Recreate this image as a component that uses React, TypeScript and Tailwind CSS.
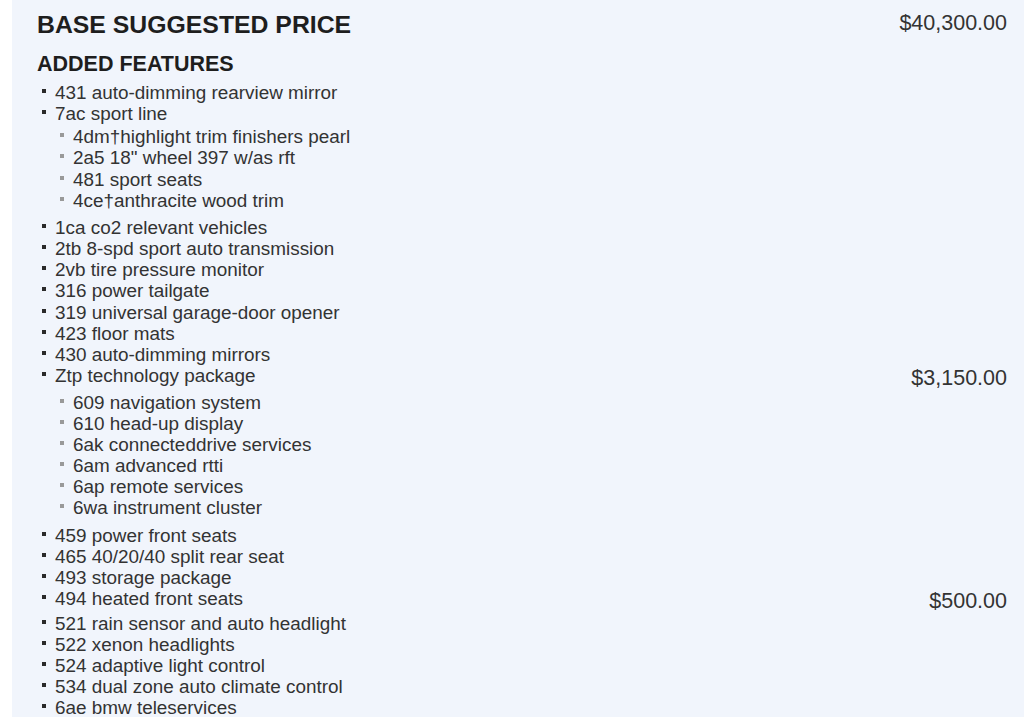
type Item = {
  label: string
  price?: string
  children?: string[]
}

const items: Item[] = [
  { label: '431 auto-dimming rearview mirror' },
  {
    label: '7ac sport line',
    children: ['4dm†highlight trim finishers pearl', '2a5 18" wheel 397 w/as rft', '481 sport seats', '4ce†anthracite wood trim']
  },
  { label: '1ca co2 relevant vehicles' },
  { label: '2tb 8-spd sport auto transmission' },
  { label: '2vb tire pressure monitor' },
  { label: '316 power tailgate' },
  { label: '319 universal garage-door opener' },
  { label: '423 floor mats' },
  { label: '430 auto-dimming mirrors' },
  {
    label: 'Ztp technology package',
    price: '$3,150.00',
    children: [
      '609 navigation system',
      '610 head-up display',
      '6ak connecteddrive services',
      '6am advanced rtti',
      '6ap remote services',
      '6wa instrument cluster'
    ]
  },
  { label: '459 power front seats' },
  { label: '465 40/20/40 split rear seat' },
  { label: '493 storage package' },
  { label: '494 heated front seats', price: '$500.00' },
  { label: '521 rain sensor and auto headlight' },
  { label: '522 xenon headlights' },
  { label: '524 adaptive light control' },
  { label: '534 dual zone auto climate control' },
  { label: '6ae bmw teleservices' }
]

const Bullet = ({ sub }: { sub?: boolean }) => (
  <span className="flex w-[18px] shrink-0 pl-[5px] pt-[7px]">
    <span className={sub ? 'block h-[4px] w-[4px] bg-[#999]' : 'block h-[4px] w-[4px] bg-[#2a2a2a]'} />
  </span>
)

const FeatureRow = ({ item }: { item: Item }) => (
  <li>
    <div className="flex items-start justify-between">
      <div className="flex">
        <Bullet />
        <span>{item.label}</span>
      </div>
      {item.price && <span className="pt-[0.6px] text-[21.5px] leading-[24px] text-[#333]">{item.price}</span>}
    </div>
    {item.children && (
      <ul className="mt-[2px] mb-[6px] ml-[18px]">
        {item.children.map((child) => (
          <li key={child} className="flex">
            <Bullet sub />
            <span>{child}</span>
          </li>
        ))}
      </ul>
    )}
  </li>
)

export default function App() {
  return (
    <div className="flex min-h-[717px] w-full bg-white font-['Liberation_Sans',Arial,sans-serif]">
      <div className="w-[12px] shrink-0 bg-white" />
      <div className="flex-1 overflow-hidden bg-[#f1f5fc] pt-[10px] pr-[17px] pl-[25px] text-[#333]">
        <div className="flex items-start justify-between">
          <h1 className="text-[24.8px] leading-[30px] font-bold text-[#1e1e1e]">BASE SUGGESTED PRICE</h1>
          <span className="pt-[1px] text-[21.5px] leading-[25px] text-[#333]">$40,300.00</span>
        </div>
        <h2 className="mt-[11px] text-[21.5px] leading-[26px] font-bold text-[#1e1e1e]">ADDED FEATURES</h2>
        <ul className="mt-[5px] text-[18.9px] leading-[21.15px]">
          {items.map((item) => (
            <FeatureRow key={item.label} item={item} />
          ))}
        </ul>
      </div>
    </div>
  )
}
